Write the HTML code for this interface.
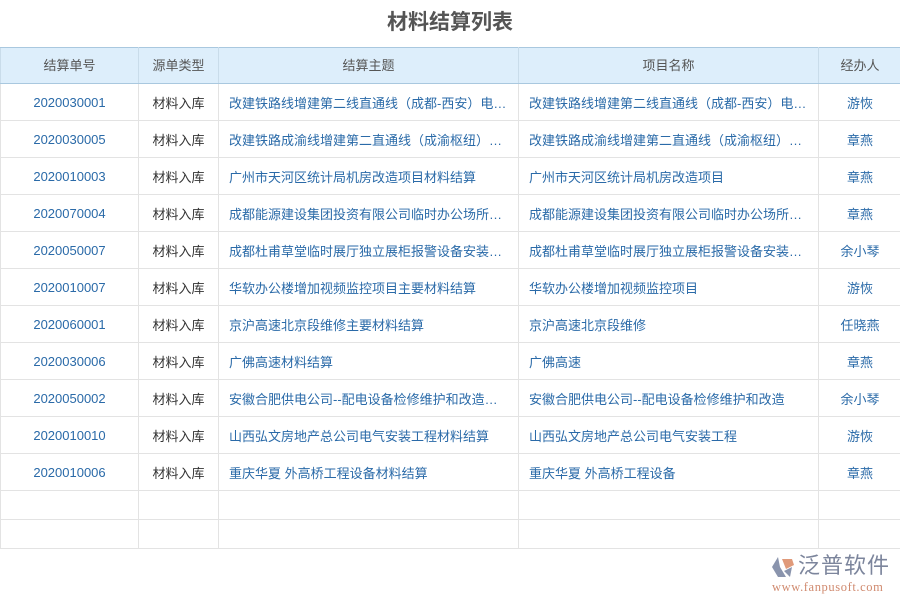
<!DOCTYPE html>
<html><head><meta charset="utf-8"><style>
body{margin:0;width:900px;height:600px;background:#fff;font-family:"Liberation Sans","Noto Sans CJK SC",sans-serif;position:relative;overflow:hidden}
h1{position:absolute;top:8px;left:0;width:900px;text-align:center;margin:0;font-size:21px;color:#555;font-weight:bold;line-height:30px}
table{position:absolute;top:47px;left:0;border-collapse:collapse;table-layout:fixed;width:901px;font-size:13px}
th{background:#ddeefb;color:#555;font-weight:normal;height:35px;padding:0;line-height:16px;border:1px solid #a9c8df;border-left-color:#c9dcea;border-right-color:#c9dcea;box-sizing:border-box}
td{height:36px;border:1px solid #e3e3e3;color:#2a6aa8;text-align:center;white-space:nowrap;overflow:hidden;text-overflow:ellipsis;padding:0 10px}
td.l{text-align:left}
td.k{color:#333}
tr.e td{height:28px}
.logo{position:absolute;left:770px;top:553px}
</style></head><body>
<h1>材料结算列表</h1>
<table>
<colgroup><col style="width:138px"><col style="width:80px"><col style="width:300px"><col style="width:300px"><col style="width:83px"></colgroup>
<tr style="height:36px"><th>结算单号</th><th>源单类型</th><th>结算主题</th><th>项目名称</th><th>经办人</th></tr>
<tr><td>2020030001</td><td class="k">材料入库</td><td class="l">改建铁路线增建第二线直通线（成都-西安）电气化工程</td><td class="l">改建铁路线增建第二线直通线（成都-西安）电气化工程</td><td>游恢</td></tr>
<tr><td>2020030005</td><td class="k">材料入库</td><td class="l">改建铁路成渝线增建第二直通线（成渝枢纽）工程</td><td class="l">改建铁路成渝线增建第二直通线（成渝枢纽）工程</td><td>章燕</td></tr>
<tr><td>2020010003</td><td class="k">材料入库</td><td class="l">广州市天河区统计局机房改造项目材料结算</td><td class="l">广州市天河区统计局机房改造项目</td><td>章燕</td></tr>
<tr><td>2020070004</td><td class="k">材料入库</td><td class="l">成都能源建设集团投资有限公司临时办公场所装修</td><td class="l">成都能源建设集团投资有限公司临时办公场所装修</td><td>章燕</td></tr>
<tr><td>2020050007</td><td class="k">材料入库</td><td class="l">成都杜甫草堂临时展厅独立展柜报警设备安装工程</td><td class="l">成都杜甫草堂临时展厅独立展柜报警设备安装工程</td><td>余小琴</td></tr>
<tr><td>2020010007</td><td class="k">材料入库</td><td class="l">华软办公楼增加视频监控项目主要材料结算</td><td class="l">华软办公楼增加视频监控项目</td><td>游恢</td></tr>
<tr><td>2020060001</td><td class="k">材料入库</td><td class="l">京沪高速北京段维修主要材料结算</td><td class="l">京沪高速北京段维修</td><td>任晓燕</td></tr>
<tr><td>2020030006</td><td class="k">材料入库</td><td class="l">广佛高速材料结算</td><td class="l">广佛高速</td><td>章燕</td></tr>
<tr><td>2020050002</td><td class="k">材料入库</td><td class="l">安徽合肥供电公司--配电设备检修维护和改造工程材料</td><td class="l">安徽合肥供电公司--配电设备检修维护和改造</td><td>余小琴</td></tr>
<tr><td>2020010010</td><td class="k">材料入库</td><td class="l">山西弘文房地产总公司电气安装工程材料结算</td><td class="l">山西弘文房地产总公司电气安装工程</td><td>游恢</td></tr>
<tr><td>2020010006</td><td class="k">材料入库</td><td class="l">重庆华夏 外高桥工程设备材料结算</td><td class="l">重庆华夏 外高桥工程设备</td><td>章燕</td></tr>
<tr class="e"><td></td><td></td><td></td><td></td><td></td></tr>
<tr class="e"><td></td><td></td><td></td><td></td><td></td></tr>
</table>
<div class="logo">
<svg width="26" height="24" style="position:absolute;left:0;top:2px"><path d="M8 2 L2 12 L8 22 L16 22 L10 12 Z" fill="#8a94ad"/><path d="M12 4 L22 4 L24 10 L16 14 Z" fill="#e09a7a"/><path d="M14 16 L22 12 L20 22 Z" fill="#8a94ad"/></svg>
<div style="position:absolute;left:28px;top:0;font-size:22px;color:#7c859c;white-space:nowrap;letter-spacing:1px;line-height:26px">泛普软件</div>
<div style="position:absolute;left:2px;top:27px;font-size:12.5px;letter-spacing:0.6px;color:#d08a6f;font-family:'Liberation Serif',serif;white-space:nowrap">www.fanpusoft.com</div>
</div>
</body></html>
